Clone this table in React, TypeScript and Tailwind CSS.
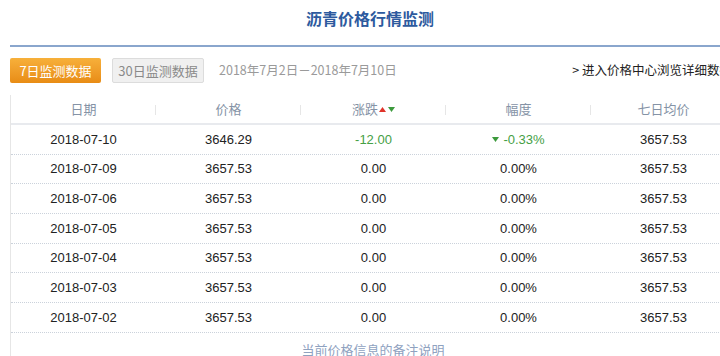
import React from "react";

const rows = [
  ["2018-07-10", "3646.29", "-12.00", "-0.33%", "3657.53", true],
  ["2018-07-09", "3657.53", "0.00", "0.00%", "3657.53", false],
  ["2018-07-06", "3657.53", "0.00", "0.00%", "3657.53", false],
  ["2018-07-05", "3657.53", "0.00", "0.00%", "3657.53", false],
  ["2018-07-04", "3657.53", "0.00", "0.00%", "3657.53", false],
  ["2018-07-03", "3657.53", "0.00", "0.00%", "3657.53", false],
  ["2018-07-02", "3657.53", "0.00", "0.00%", "3657.53", false],
] as const;

const Up = () => (
  <svg width="7" height="5" viewBox="0 0 7 5" className="inline-block">
    <path d="M3.5 0 L7 5 L0 5 Z" fill="#e0332a" />
  </svg>
);
const Down = () => (
  <svg width="7" height="5" viewBox="0 0 7 5" className="inline-block">
    <path d="M0 0 L7 0 L3.5 5 Z" fill="#3c9a3c" />
  </svg>
);

const cjk = "font-['Noto_Sans_CJK_SC','Noto_Sans',sans-serif]";

export default function App() {
  const headers = ["日期", "价格", "涨跌", "幅度", "七日均价"];
  return (
    <div className="w-[720px] h-[356px] overflow-hidden bg-white font-['Liberation_Sans','Noto_Sans_CJK_SC',sans-serif]">
      <div className="pl-[10px]">
        <div className={`h-[36px] flex items-center justify-center pl-[10px] text-[16px] font-bold text-[#2d5a9e] ${cjk}`}>
          沥青价格行情监测
        </div>
        <div className="mt-[9px] h-[2px] bg-[#8aa6cd]" />
        <div className="mt-[11px] h-[25px] flex items-center whitespace-nowrap">
          <div className={`w-[91px] h-[25px] flex items-center justify-center rounded-[2px] bg-gradient-to-b from-[#f7b03a] to-[#e88c14] text-white text-[13px] ${cjk}`}>
            7日监测数据
          </div>
          <div className={`ml-[11px] w-[92px] h-[25px] flex items-center justify-center rounded-[2px] bg-[#f0f0f0] border border-[#dcdcdc] text-[#8a8a8a] text-[13px] ${cjk}`}>
            30日监测数据
          </div>
          <div className={`ml-[15px] text-[12.5px] text-[#9a9a9a] ${cjk}`}>
            2018年7月2日－2018年7月10日
          </div>
          <div className={`ml-auto mr-[-12px] text-[12.5px] text-[#222] ${cjk}`}>
            &gt; 进入价格中心浏览详细数据
          </div>
        </div>
        <div className="mt-[12px] border-l border-[#e6e6e6] w-[725px]">
          <div className={`grid grid-cols-[repeat(5,145px)] h-[30px] border-b-2 border-[#e8eaee] text-[13px] text-[#8593a6] ${cjk}`}>
            {headers.map((h, i) => (
              <div key={h} className="relative flex items-center justify-center">
                <span>{h}</span>
                {i === 2 && (
                  <span className="ml-[1px] flex items-center gap-[2px]">
                    <Up />
                    <Down />
                  </span>
                )}
                <span className="absolute right-0 top-[10px] h-[10px] w-px bg-[#e6e6e6]" />
              </div>
            ))}
          </div>
          {rows.map((r) => (
            <div
              key={r[0]}
              className="grid grid-cols-[repeat(5,145px)] h-[29.7px] border-b border-dotted border-[#cbd2db] text-[13px] text-[#222]"
            >
              <div className="flex items-center justify-center">{r[0]}</div>
              <div className="flex items-center justify-center">{r[1]}</div>
              <div className={`flex items-center justify-center ${r[5] ? "text-[#45a045]" : ""}`}>{r[2]}</div>
              <div className={`flex items-center justify-center ${r[5] ? "text-[#45a045]" : ""}`}>
                {r[5] && (
                  <span className="mr-[4px] flex items-center">
                    <Down />
                  </span>
                )}
                {r[3]}
              </div>
              <div className="flex items-center justify-center">{r[4]}</div>
            </div>
          ))}
          <div className={`h-[30px] flex items-center justify-center pt-[4px] text-[13px] text-[#8fa2bf] ${cjk}`}>
            当前价格信息的备注说明
          </div>
        </div>
      </div>
    </div>
  );
}
